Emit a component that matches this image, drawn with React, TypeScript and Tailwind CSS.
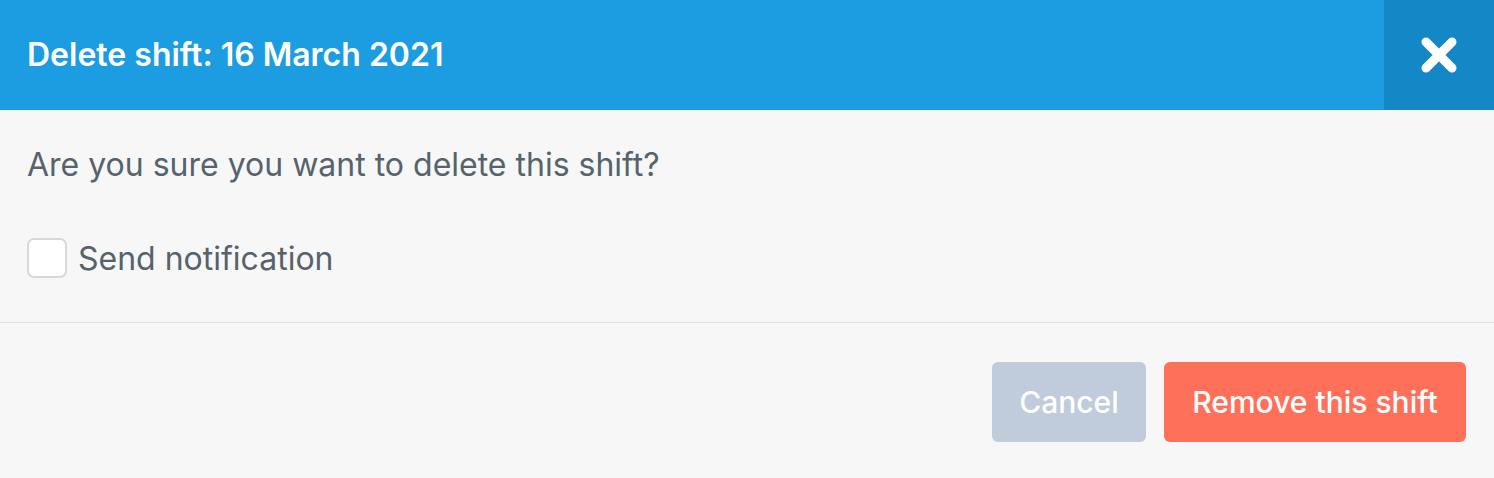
export default function App() {
  return (
    <div className="w-[1494px] h-[478px] bg-[#f7f7f7] flex flex-col" style={{ fontFamily: "Inter, 'Open Sans', sans-serif" }}>
      <div className="h-[110px] bg-[#1c9ce1] flex items-stretch">
        <div className="flex-1 flex items-center pl-[27px]">
          <h1 className="text-[32px] font-semibold text-white leading-none">Delete shift: 16 March 2021</h1>
        </div>
        <button className="w-[110px] bg-[#1487c7] flex items-center justify-center">
          <svg width="38" height="38" viewBox="0 0 38 38" fill="none" stroke="white" strokeWidth="9" strokeLinecap="round">
            <path d="M6 6 L32 32 M32 6 L6 32" />
          </svg>
        </button>
      </div>
      <div className="h-[213px] border-b border-[#e1e1e1] px-[27px] pt-[37px] flex flex-col">
        <p className="text-[32px] leading-[36px] text-[#56636c]">Are you sure you want to delete this shift?</p>
        <label className="mt-[55px] flex items-center gap-[11px]">
          <span className="w-[40px] h-[40px] rounded-[7px] border-2 border-[#d8d8d8] bg-white" />
          <span className="text-[32px] leading-[36px] text-[#56636c] translate-y-[1px]">Send notification</span>
        </label>
      </div>
      <div className="flex-1 flex justify-end items-start pt-[39px] pr-[28px] gap-[18px]">
        <button className="w-[154px] h-[80px] rounded-[6px] bg-[#c0cbdb] text-white text-[30px] font-medium">Cancel</button>
        <button className="w-[302px] h-[80px] rounded-[6px] bg-[#ff705a] text-white text-[30px] font-medium">Remove this shift</button>
      </div>
    </div>
  );
}
